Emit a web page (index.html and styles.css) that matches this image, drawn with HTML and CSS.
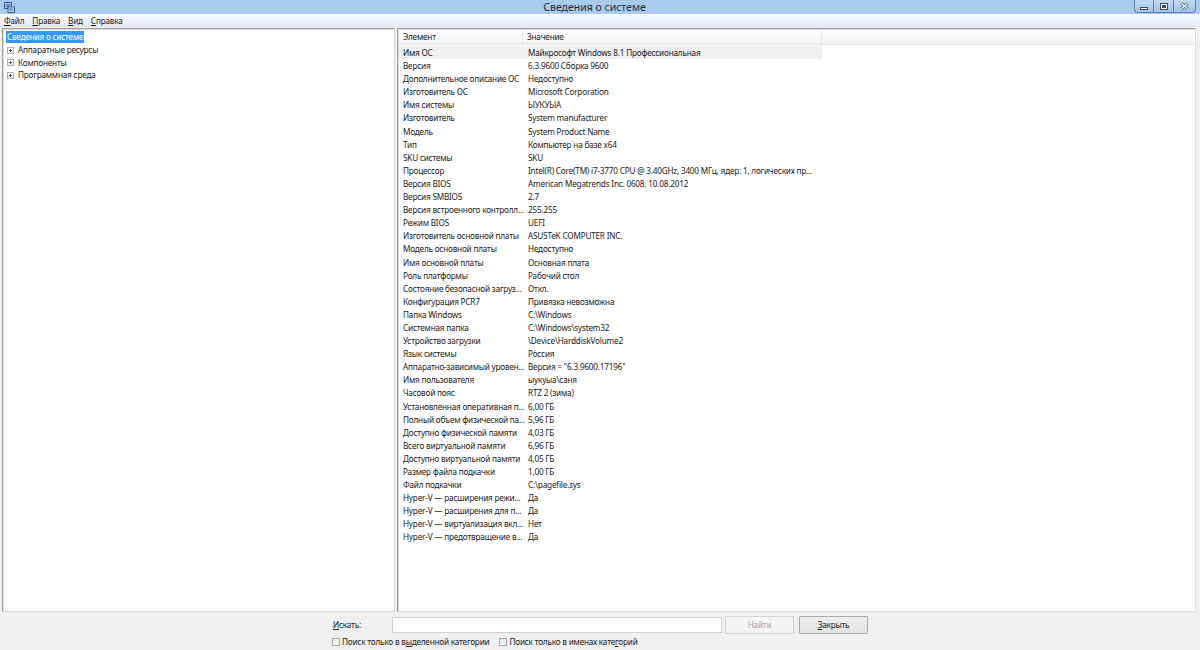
FILE: index.html
```html
<!DOCTYPE html>
<html lang="ru">
<head>
	<meta charset="utf-8">
	<title>Сведения о системе</title>
	<link rel="stylesheet" href="styles.css">
</head>
<body>
	<div class="window">
		<div class="titlebar">
			<svg class="app-icon" width="11" height="11" viewBox="0 0 11 11">
				<rect x="0.5" y="0.5" width="7" height="6" fill="#d8e6f6" stroke="#3b5c8a"/>
				<rect x="1.5" y="1.5" width="5" height="4" fill="#5a8fd0"/>
				<rect x="4" y="5" width="6.5" height="5.5" fill="#e8eef6" stroke="#3b5c8a"/>
				<rect x="5" y="6" width="4.5" height="3.5" fill="#7aa6dc"/>
			</svg>
			<div class="title">Сведения о системе</div>
			<div class="winbtns">
				<div class="winbtn min"><span></span></div>
				<div class="winbtn max"><span></span></div>
				<div class="winbtn close">
					<svg width="9" height="8" viewBox="0 0 9 8">
						<path d="M1 1 L8 7 M8 1 L1 7" stroke="#3d4d66" stroke-width="2.6"/>
						<path d="M1 1 L8 7 M8 1 L1 7" stroke="#fff" stroke-width="1.3"/>
					</svg>
				</div>
			</div>
		</div>

		<div class="menubar">
			<span><u>Ф</u>айл</span>
			<span><u>П</u>равка</span>
			<span><u>В</u>ид</span>
			<span><u>С</u>правка</span>
		</div>

		<div class="main">
			<div class="pane tree">
				<div class="node root"><span class="sel">Сведения о системе</span></div>
				<div class="node"><span class="plus"></span>Аппаратные ресурсы</div>
				<div class="node"><span class="plus"></span>Компоненты</div>
				<div class="node"><span class="plus"></span>Программная среда</div>
			</div>

			<div class="pane list">
				<div class="list-head">
					<div class="col1">Элемент</div>
					<div class="col2">Значение</div>
					<div class="col3"></div>
				</div>
				<div class="rows">
					<div class="row is-selected"><div class="col1">Имя ОС</div><div class="col2">Майкрософт Windows 8.1 Профессиональная</div></div>
					<div class="row"><div class="col1">Версия</div><div class="col2">6.3.9600 Сборка 9600</div></div>
					<div class="row"><div class="col1">Дополнительное описание ОС</div><div class="col2">Недоступно</div></div>
					<div class="row"><div class="col1">Изготовитель ОС</div><div class="col2">Microsoft Corporation</div></div>
					<div class="row"><div class="col1">Имя системы</div><div class="col2">ЫУКУЫА</div></div>
					<div class="row"><div class="col1">Изготовитель</div><div class="col2">System manufacturer</div></div>
					<div class="row"><div class="col1">Модель</div><div class="col2">System Product Name</div></div>
					<div class="row"><div class="col1">Тип</div><div class="col2">Компьютер на базе x64</div></div>
					<div class="row"><div class="col1">SKU системы</div><div class="col2">SKU</div></div>
					<div class="row"><div class="col1">Процессор</div><div class="col2">Intel(R) Core(TM) i7-3770 CPU @ 3.40GHz, 3400 МГц, ядер: 1, логических пр...</div></div>
					<div class="row"><div class="col1">Версия BIOS</div><div class="col2">American Megatrends Inc. 0608, 10.08.2012</div></div>
					<div class="row"><div class="col1">Версия SMBIOS</div><div class="col2">2.7</div></div>
					<div class="row"><div class="col1">Версия встроенного контролл...</div><div class="col2">255.255</div></div>
					<div class="row"><div class="col1">Режим BIOS</div><div class="col2">UEFI</div></div>
					<div class="row"><div class="col1">Изготовитель основной платы</div><div class="col2">ASUSTeK COMPUTER INC.</div></div>
					<div class="row"><div class="col1">Модель основной платы</div><div class="col2">Недоступно</div></div>
					<div class="row"><div class="col1">Имя основной платы</div><div class="col2">Основная плата</div></div>
					<div class="row"><div class="col1">Роль платформы</div><div class="col2">Рабочий стол</div></div>
					<div class="row"><div class="col1">Состояние безопасной загруз...</div><div class="col2">Откл.</div></div>
					<div class="row"><div class="col1">Конфигурация PCR7</div><div class="col2">Привязка невозможна</div></div>
					<div class="row"><div class="col1">Папка Windows</div><div class="col2">C:\Windows</div></div>
					<div class="row"><div class="col1">Системная папка</div><div class="col2">C:\Windows\system32</div></div>
					<div class="row"><div class="col1">Устройство загрузки</div><div class="col2">\Device\HarddiskVolume2</div></div>
					<div class="row"><div class="col1">Язык системы</div><div class="col2">Россия</div></div>
					<div class="row"><div class="col1">Аппаратно-зависимый уровен...</div><div class="col2">Версия = "6.3.9600.17196"</div></div>
					<div class="row"><div class="col1">Имя пользователя</div><div class="col2">ыукуыа\саня</div></div>
					<div class="row"><div class="col1">Часовой пояс</div><div class="col2">RTZ 2 (зима)</div></div>
					<div class="row"><div class="col1">Установленная оперативная п...</div><div class="col2">6,00 ГБ</div></div>
					<div class="row"><div class="col1">Полный объем физической па...</div><div class="col2">5,96 ГБ</div></div>
					<div class="row"><div class="col1">Доступно физической памяти</div><div class="col2">4,03 ГБ</div></div>
					<div class="row"><div class="col1">Всего виртуальной памяти</div><div class="col2">6,96 ГБ</div></div>
					<div class="row"><div class="col1">Доступно виртуальной памяти</div><div class="col2">4,05 ГБ</div></div>
					<div class="row"><div class="col1">Размер файла подкачки</div><div class="col2">1,00 ГБ</div></div>
					<div class="row"><div class="col1">Файл подкачки</div><div class="col2">C:\pagefile.sys</div></div>
					<div class="row"><div class="col1">Hyper-V — расширения режи...</div><div class="col2">Да</div></div>
					<div class="row"><div class="col1">Hyper-V — расширения для п...</div><div class="col2">Да</div></div>
					<div class="row"><div class="col1">Hyper-V — виртуализация вкл...</div><div class="col2">Нет</div></div>
					<div class="row"><div class="col1">Hyper-V — предотвращение в...</div><div class="col2">Да</div></div>
				</div>
			</div>
		</div>

		<div class="searchbar">
			<div class="search-row">
				<label class="search-label"><u>И</u>скать:</label>
				<div class="search-input"></div>
				<div class="btn disabled">Найти</div>
				<div class="btn"><u>З</u>акрыть</div>
			</div>
			<div class="check-row">
				<span class="check"><span class="box"></span>Поиск только в в<u>ы</u>деленной категории</span>
				<span class="check"><span class="box"></span>Поиск только в именах кате<u>г</u>орий</span>
			</div>
		</div>
	</div>
</body>
</html>
```

FILE: styles.css
```css
* {
	box-sizing: border-box;
}

html,
body {
	margin: 0;
	padding: 0;
}

body {
	width: 1200px;
	height: 650px;
	overflow: hidden;
	background-color: #f0f0f0;
	font-family: "Noto Sans", "Open Sans", sans-serif;
	font-size: 8.2px;
	letter-spacing: -0.2px;
	color: #1a1a1a;
}

u {
	text-decoration: underline;
	text-underline-offset: 1px;
}

.window {
	display: flex;
	flex-direction: column;
	height: 650px;
}

/* title bar */

.titlebar {
	height: 14px;
	display: flex;
	align-items: flex-start;
	background-color: #a9cbee;
}

.app-icon {
	margin: 2px 0 0 4px;
}

.title {
	flex: 1;
	text-align: center;
	font-size: 10.5px;
	letter-spacing: 0;
	line-height: 14px;
	color: #1e2a3a;
	padding-left: 40px;
}

.winbtns {
	display: flex;
	margin-right: 4px;
}

.winbtn {
	height: 13px;
	display: flex;
	align-items: center;
	justify-content: center;
	border: 1px solid #5f7fa6;
	border-top: 0;
	border-left: 0;
	background: linear-gradient(#c3daf3, #a3c2e6);
}

.winbtn.min {
	width: 20px;
	border-left: 1px solid #5f7fa6;
	border-bottom-left-radius: 4px;
}

.winbtn.max {
	width: 20px;
}

.winbtn.close {
	width: 22px;
	border-bottom-right-radius: 4px;
}

.winbtn.min span {
	width: 8px;
	height: 3px;
	margin-top: 4px;
	background-color: #fff;
	border: 1px solid #3d4d66;
}

.winbtn.max span {
	width: 8px;
	height: 7px;
	border: 1px solid #3d4d66;
	background-color: #fff;
	box-shadow: inset 0 0 0 1px #fff, inset 0 0 0 3px #3d4d66;
}

/* menu */

.menubar {
	height: 13px;
	display: flex;
	gap: 8px;
	padding-left: 4px;
	line-height: 13px;
	background: linear-gradient(#f9fafc, #e8ecf4);
	border-bottom: 1px solid #dfe3ec;
}

/* main panes */

.main {
	flex: 1;
	display: flex;
	gap: 2px;
	padding: 1px 4px 0 2px;
	min-height: 0;
}

.pane {
	background-color: #fff;
	border: 1px solid #a0a0a0;
	border-right-color: #dcdcdc;
	border-bottom-color: #dcdcdc;
	box-shadow: inset 1px 1px 0 #d8d8d8;
}

.tree {
	width: 393px;
	padding: 2px 0 0 3px;
}

.node {
	height: 12.5px;
	line-height: 12.5px;
	display: flex;
	align-items: center;
	white-space: nowrap;
}

.node.root {
	height: 12px;
	margin-bottom: 1px;
}

.sel {
	background-color: #3399ff;
	color: #fff;
	padding: 0 1px;
	line-height: 12px;
}

.plus {
	width: 7px;
	height: 7px;
	margin: 0 4px 0 1px;
	border: 1px solid #b0b0b0;
	position: relative;
	background: linear-gradient(#fff, #eaeaea);
}

.plus::before,
.plus::after {
	content: "";
	position: absolute;
	background-color: #555;
}

.plus::before {
	left: 1px;
	top: 2px;
	width: 3px;
	height: 1px;
}

.plus::after {
	left: 2px;
	top: 1px;
	width: 1px;
	height: 3px;
}

.list {
	flex: 1;
	padding: 1px;
}

.list-head {
	display: flex;
	height: 15px;
	line-height: 14px;
	background: linear-gradient(#ffffff, #f3f3f5);
	border-bottom: 1px solid #e3e5ea;
}

.list-head .col1 {
	width: 124px;
	padding-left: 4px;
	border-right: 1px solid #e3e5ea;
}

.list-head .col2 {
	width: 299px;
	padding-left: 4px;
	border-right: 1px solid #e3e5ea;
}

.rows {
	padding-top: 1px;
}

.row {
	display: flex;
	width: 423px;
	height: 13.1px;
	line-height: 13.1px;
	white-space: nowrap;
}

.row.is-selected {
	background-color: #f0f0f0;
}

.row .col1 {
	flex: none;
	width: 125px;
	padding-left: 4px;
}

.row .col2 {
	flex: none;
	padding-left: 4px;
}

/* search bar */

.searchbar {
	height: 38px;
	padding: 3px 0 0 332px;
}

.search-row {
	display: flex;
	align-items: center;
	height: 19px;
}

.search-label {
	width: 60px;
	padding-left: 1px;
}

.search-input {
	width: 330px;
	height: 16px;
	background-color: #fff;
	border: 1px solid #d0d0d0;
	margin-right: 3px;
}

.btn {
	width: 69px;
	height: 18px;
	margin-right: 5px;
	display: flex;
	align-items: center;
	justify-content: center;
	border: 1px solid #acacac;
	border-radius: 1px;
	background: linear-gradient(#f0f0f0, #e2e2e2);
}

.btn.disabled {
	color: #a8a8a8;
	background: #f4f4f4;
	border-color: #d2d2d2;
}

.check-row {
	display: flex;
	gap: 10px;
	margin-top: 2px;
}

.check {
	display: flex;
	align-items: center;
}

.box {
	width: 8px;
	height: 8px;
	margin-right: 2px;
	border: 1px solid #a6a6a6;
	background: linear-gradient(#ececec, #fafafa);
}
```
